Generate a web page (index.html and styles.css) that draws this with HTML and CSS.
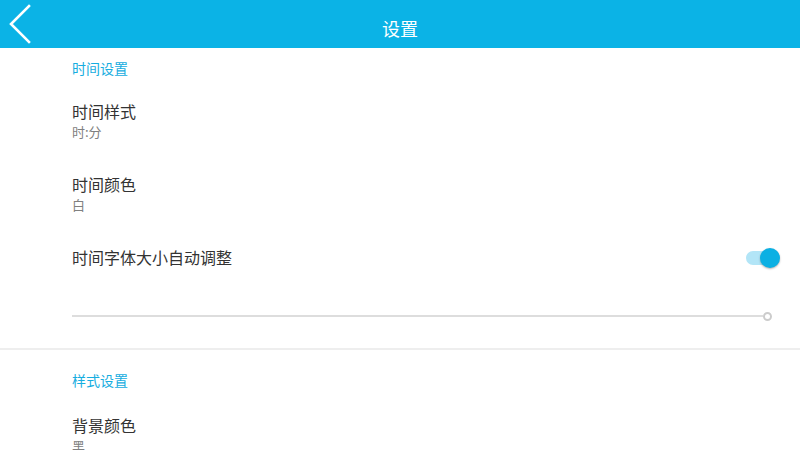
FILE: index.html
```html
<!DOCTYPE html>
<html lang="zh-CN">
<head>
<meta charset="utf-8">
<title>设置</title>
<link rel="stylesheet" href="styles.css">
</head>
<body>
<header class="appbar">
  <div class="appbar-left">
    <svg class="back" width="24" height="42" viewBox="0 0 24 42">
      <polyline points="21,3 3,21 21,39" fill="none" stroke="#ffffff" stroke-width="2.6" stroke-linecap="square"/>
    </svg>
  </div>
  <div class="appbar-title">设置</div>
  <div class="appbar-right"></div>
</header>
<main class="content">
  <section class="group">
    <div class="group-title">时间设置</div>
    <div class="item">
      <div class="item-title">时间样式</div>
      <div class="item-sub">时:分</div>
    </div>
    <div class="item">
      <div class="item-title">时间颜色</div>
      <div class="item-sub">白</div>
    </div>
    <div class="item item-switch">
      <div class="item-title">时间字体大小自动调整</div>
      <div class="switch">
        <span class="switch-track"></span>
        <span class="switch-thumb"></span>
      </div>
    </div>
    <div class="slider">
      <div class="slider-track"></div>
      <div class="slider-thumb"></div>
    </div>
  </section>
  <div class="divider"></div>
  <section class="group group-second">
    <div class="group-title">样式设置</div>
    <div class="item">
      <div class="item-title">背景颜色</div>
      <div class="item-sub">黑</div>
    </div>
  </section>
</main>
</body>
</html>
```
FILE: styles.css
```css
html, body {
  margin: 0;
  padding: 0;
  background: #ffffff;
  font-family: "Noto Sans CJK SC", "Noto Sans", sans-serif;
  overflow: hidden;
  height: 450px;
}

.appbar {
  height: 48px;
  background: #0bb3e6;
  display: grid;
  grid-template-columns: 1fr auto 1fr;
  align-items: center;
}

.appbar-left {
  display: flex;
  align-items: center;
  padding-left: 8px;
  height: 48px;
}

.back {
  display: block;
}

.appbar-title {
  color: #ffffff;
  font-size: 18px;
  line-height: 24px;
  padding-top: 8px;
}

.content {
  display: flex;
  flex-direction: column;
}

.group {
  padding-left: 72px;
}

.group-title {
  color: #16ade0;
  font-size: 14px;
  line-height: 22px;
  padding-top: 9px;
  padding-bottom: 11px;
}

.group-second .group-title {
  padding-top: 19px;
}

.item {
  padding-top: 10px;
  padding-bottom: 22px;
}

.group-second .item {
  padding-top: 12px;
}

.item-title {
  color: #333333;
  font-size: 16px;
  line-height: 23px;
}

.item-sub {
  color: #808080;
  font-size: 13px;
  line-height: 18px;
}

.item-switch {
  display: flex;
  align-items: center;
  justify-content: space-between;
  padding-top: 10px;
  padding-bottom: 0;
  padding-right: 20px;
}

.switch {
  position: relative;
  width: 34px;
  height: 20px;
}

.switch-track {
  position: absolute;
  left: 0;
  top: 3px;
  width: 30px;
  height: 14px;
  border-radius: 7px;
  background: #b2e5f7;
}

.switch-thumb {
  position: absolute;
  right: 0;
  top: 0;
  width: 20px;
  height: 20px;
  border-radius: 50%;
  background: #0bb0e3;
  box-shadow: 0 1px 2px rgba(0, 0, 0, 0.3);
}

.slider {
  display: flex;
  align-items: center;
  height: 10px;
  margin-top: 42px;
  padding-right: 28px;
}

.slider-track {
  flex: 1;
  height: 2px;
  background: #dddddd;
}

.slider-thumb {
  width: 5px;
  height: 5px;
  border: 2px solid #cccccc;
  border-radius: 50%;
  background: #ffffff;
}

.divider {
  margin-top: 27px;
  height: 2px;
  background: #eeeeee;
}
```
